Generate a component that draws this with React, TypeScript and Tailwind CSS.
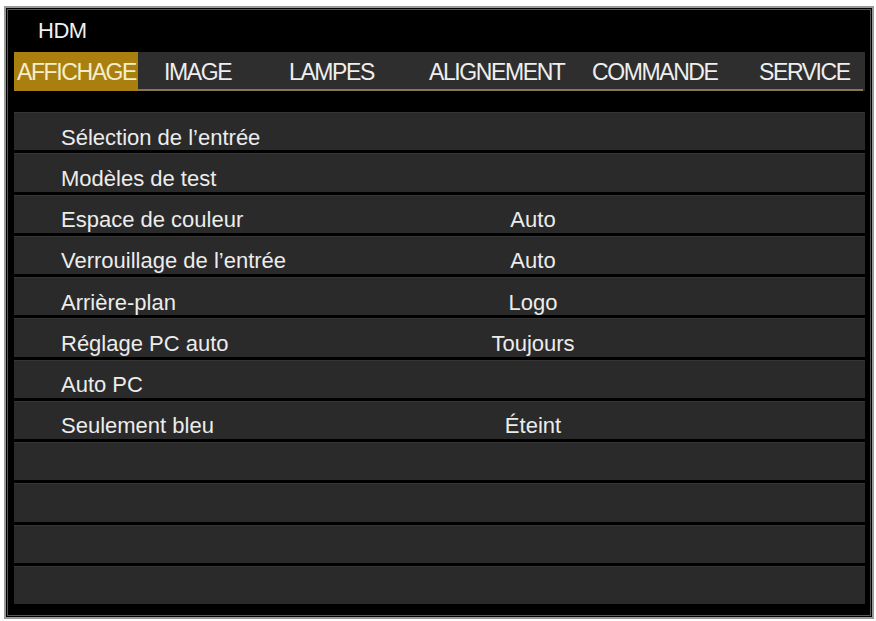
import React from 'react';

interface Row {
  label: string;
  value?: string;
}

const tabs = [
  { name: 'AFFICHAGE', w: 'w-[124px]', pl: 'pl-[3px]', active: true },
  { name: 'IMAGE', w: 'w-[136px]', pl: 'pl-[26px]' },
  { name: 'LAMPES', w: 'w-[140px]', pl: 'pl-[15px]' },
  { name: 'ALIGNEMENT', w: 'w-[163px]', pl: 'pl-[15px]' },
  { name: 'COMMANDE', w: 'w-[167px]', pl: 'pl-[15px]' },
  { name: 'SERVICE', w: 'w-[119px]', pl: 'pl-[15px]' },
];

const rows: Row[] = [
  { label: 'Sélection de l\u2019entrée' },
  { label: 'Modèles de test' },
  { label: 'Espace de couleur', value: 'Auto' },
  { label: 'Verrouillage de l\u2019entrée', value: 'Auto' },
  { label: 'Arrière-plan', value: 'Logo' },
  { label: 'Réglage PC auto', value: 'Toujours' },
  { label: 'Auto PC' },
  { label: 'Seulement bleu', value: 'Éteint' },
  { label: '' },
  { label: '' },
  { label: '' },
  { label: '' },
];

export default function App() {
  return (
    <div className="h-[621px] w-[876px] bg-white pl-[4px] pt-[6px] font-['Liberation_Sans',Arial,sans-serif]">
      <div className="h-[613px] w-[870px] border-2 border-[#9a9a9a] bg-black p-[1px]">
        <div className="flex h-full w-full flex-col border border-[#555] bg-black pl-[6px] pr-[5px]">
          <div className="pl-[24px] pt-[10px] text-[22px] leading-none tracking-[-0.5px] text-[#f0f0f0]">HDM</div>

          <div className="mt-[10px] flex h-[39px] bg-[#2e2e2e]">
            {tabs.map(t => (
              <div
                key={t.name}
                className={
                  t.active
                    ? `${t.w} ${t.pl} h-full bg-[#a98010] pt-[9px] text-[23px] leading-none tracking-[-1.4px] text-[#f6eecb]`
                    : `${t.w} ${t.pl} h-full border-b-2 border-[#8a7650] pt-[9px] text-[23px] leading-none tracking-[-1.4px] text-[#eeeeee]`
                }
              >
                {t.name}
              </div>
            ))}
          </div>

          <div className="mt-[21px] grid h-[492px] grid-rows-12 gap-[3px]">
            {rows.map((r, i) => (
              <div
                key={i}
                className="flex items-center border-t border-[#363636] bg-[#2a2a2a] pl-[47px] pt-[12px] text-[22px] leading-none text-[#ececec]"
              >
                <span className="w-[372px] whitespace-nowrap">{r.label}</span>
                <span className="w-[200px] text-center">{r.value}</span>
              </div>
            ))}
          </div>
        </div>
      </div>
    </div>
  );
}
